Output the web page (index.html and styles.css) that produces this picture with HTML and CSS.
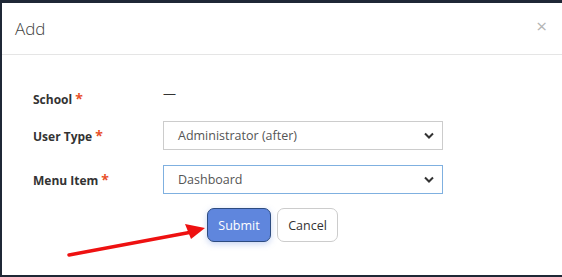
FILE: index.html
```html
<!DOCTYPE html>
<html lang="en">
<head>
  <meta charset="UTF-8">
  <title>Add</title>
  <link rel="stylesheet" href="styles.css">
</head>
<body>

  <div class="modal">
    <div class="modal-header">
      <h4 class="modal-title">Add</h4>
      <span class="close">&times;</span>
    </div>
    <div class="modal-body">
      <div class="form-row school-row">
        <label class="form-label">School<span class="req">*</span></label>
        <div class="static-value">&mdash;</div>
      </div>
      <div class="form-row">
        <label class="form-label">User Type<span class="req">*</span></label>
        <div class="select">
          <span>Administrator (after)</span>
          <svg width="10" height="7" viewBox="0 0 10 7"><path d="M1 1.5 L5 5.5 L9 1.5" fill="none" stroke="#333" stroke-width="2"/></svg>
        </div>
      </div>
      <div class="form-row">
        <label class="form-label">Menu Item<span class="req">*</span></label>
        <div class="select focused">
          <span>Dashboard</span>
          <svg width="10" height="7" viewBox="0 0 10 7"><path d="M1 1.5 L5 5.5 L9 1.5" fill="none" stroke="#333" stroke-width="2"/></svg>
        </div>
      </div>
      <div class="actions">
        <button class="btn btn-primary">Submit</button>
        <button class="btn btn-default">Cancel</button>
      </div>
    </div>

    <svg class="arrow" width="150" height="40" viewBox="0 0 150 40">
      <line x1="2" y1="36" x2="125" y2="13" stroke="#ee1111" stroke-width="3.5" stroke-linecap="round"/>
      <polygon points="138,9 118,5 124,20" fill="#ee1111"/>
    </svg>
  </div>

</body>
</html>
```

FILE: styles.css
```css
body { margin: 0; background: #1f2836; font-family: "Open Sans", sans-serif; height: 277px; overflow: hidden; }
.modal { position: relative; background: #fff; margin: 3px 0 0 2px; height: 272px; box-sizing: border-box; }
.modal-header { display: flex; justify-content: space-between; align-items: center; height: 52px; padding: 0 15px 0 13px; border-bottom: 1px solid #e5e5e5; box-sizing: border-box; }
.modal-title { margin: 0; font-size: 17px; font-weight: 300; color: #444; }
.close { font-size: 19px; color: #b5b5b5; margin-top: -5px; }
.modal-body { padding: 34px 0 0 31px; }
.form-row { display: flex; align-items: center; margin-bottom: 15px; }
.school-row { align-items: flex-start; height: 20px; margin-bottom: 12px; }
.form-label { width: 130px; font-size: 12px; font-weight: 700; color: #333; }
.school-row .form-label { line-height: 20px; }
.req { color: #e8502a; margin-left: 3px; font-size: 14px; }
.static-value { font-size: 13px; line-height: 8px; color: #333; }
.select { display: flex; justify-content: space-between; align-items: center; width: 280px; height: 29px; padding: 0 8px 0 14px; border: 1px solid #ccc; box-sizing: border-box; font-size: 12.5px; color: #555; }
.select.focused { border-color: #7fb0e0; }
.actions { display: flex; gap: 6px; margin: -1px 0 0 174px; }
.btn { font-family: "Open Sans", sans-serif; font-size: 12.5px; height: 34px; border-radius: 7px; padding: 0 10px; cursor: pointer; }
.btn-primary { width: 64px; background: #5f86dd; color: #fff; border: 1px solid #2d4c80; box-shadow: 0 2px 6px rgba(95,134,221,0.35); }
.btn-default { width: 61px; background: #fff; color: #333; border: 1px solid #ccc; }
.arrow { position: absolute; left: 65px; top: 216px; }
```
